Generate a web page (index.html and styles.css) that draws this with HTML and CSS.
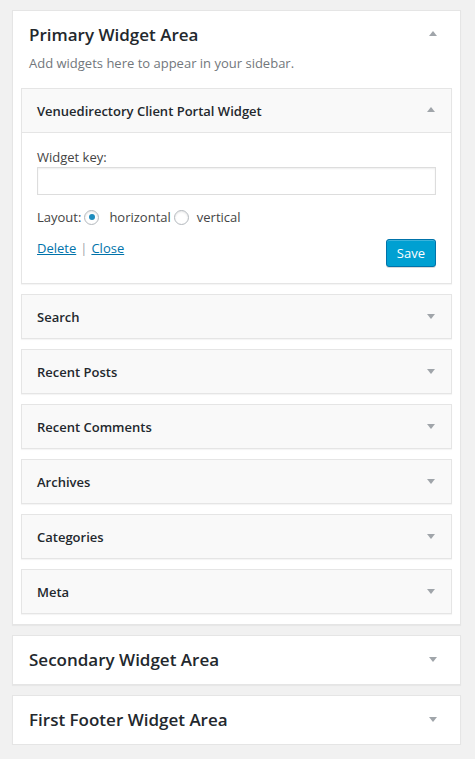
FILE: index.html
```html
<!DOCTYPE html>
<html>
<head>
<meta charset="utf-8">
<link rel="stylesheet" href="styles.css">
</head>
<body>
<div class="sidebars">
  <section class="area area-open">
    <div class="area-head area-head-open">
      <h2 class="area-title">Primary Widget Area</h2>
      <span class="arrow arrow-up"></span>
    </div>
    <p class="area-desc">Add widgets here to appear in your sidebar.</p>

    <div class="widget widget-open">
      <div class="widget-head">
        <h3 class="widget-title">Venuedirectory Client Portal Widget</h3>
        <span class="arrow arrow-up"></span>
      </div>
      <div class="widget-body">
        <label class="field-label">Widget key:</label>
        <input class="field-input" type="text">
        <div class="layout-row">
          <span>Layout:</span>
          <span class="radio radio-checked"></span>
          <span class="radio-text">horizontal</span>
          <span class="radio radio-second"></span>
          <span class="radio-text radio-text-second">vertical</span>
        </div>
        <div class="actions">
          <div class="links"><a href="#" class="link">Delete</a><span class="sep">|</span><a href="#" class="link">Close</a></div>
          <button class="save">Save</button>
        </div>
      </div>
    </div>

    <div class="widget"><div class="widget-head"><h3 class="widget-title">Search</h3><span class="arrow arrow-down"></span></div></div>
    <div class="widget"><div class="widget-head"><h3 class="widget-title">Recent Posts</h3><span class="arrow arrow-down"></span></div></div>
    <div class="widget"><div class="widget-head"><h3 class="widget-title">Recent Comments</h3><span class="arrow arrow-down"></span></div></div>
    <div class="widget"><div class="widget-head"><h3 class="widget-title">Archives</h3><span class="arrow arrow-down"></span></div></div>
    <div class="widget"><div class="widget-head"><h3 class="widget-title">Categories</h3><span class="arrow arrow-down"></span></div></div>
    <div class="widget"><div class="widget-head"><h3 class="widget-title">Meta</h3><span class="arrow arrow-down"></span></div></div>
  </section>

  <section class="area">
    <div class="area-head">
      <h2 class="area-title">Secondary Widget Area</h2>
      <span class="arrow arrow-down"></span>
    </div>
  </section>

  <section class="area">
    <div class="area-head">
      <h2 class="area-title">First Footer Widget Area</h2>
      <span class="arrow arrow-down"></span>
    </div>
  </section>
</div>
</body>
</html>
```

FILE: styles.css
```css
* { box-sizing: border-box; }

html, body {
  margin: 0;
  padding: 0;
  background: #f1f1f1;
}

body {
  font-family: "Open Sans", "Noto Sans", sans-serif;
  font-size: 13px;
  color: #444;
}

.sidebars {
  padding: 0 14px 0 12px;
}

.area {
  margin-top: 10px;
  background: #fff;
  border: 1px solid #e5e5e5;
  box-shadow: 0 1px 1px rgba(0, 0, 0, 0.04);
  padding: 0 8px;
}

.area-open {
  padding-bottom: 10px;
}

.area-head {
  display: flex;
  align-items: center;
  justify-content: space-between;
  padding: 12px 15px 13px 8px;
}

.area-head-open {
  padding-bottom: 0;
}

.area-title {
  margin: 0;
  font-size: 17px;
  line-height: 23px;
  font-weight: 600;
  color: #23282d;
}

.area-desc {
  margin: 8px 0 16px;
  padding: 0 8px;
  line-height: 18px;
  color: #72777c;
}

.arrow {
  display: block;
  width: 0;
  height: 0;
  border-left: 4px solid transparent;
  border-right: 4px solid transparent;
}

.arrow-up {
  border-bottom: 5px solid #a0a5aa;
  margin-top: -3px;
}

.arrow-down {
  border-top: 5px solid #a0a5aa;
}

.widget {
  margin-top: 10px;
  background: #f9f9f9;
  border: 1px solid #e5e5e5;
  box-shadow: 0 1px 1px rgba(0, 0, 0, 0.04);
}

.widget-open {
  margin-top: 0;
}

.widget-head {
  height: 43px;
  display: flex;
  align-items: center;
  justify-content: space-between;
  padding: 0 16px 0 15px;
}

.widget-open .widget-head {
  height: 44px;
  border-bottom: 1px solid #e5e5e5;
}

.widget-title {
  margin: 0;
  font-size: 13px;
  font-weight: 600;
  line-height: 18px;
  color: #23282d;
}

.widget-body {
  background: #fff;
  padding: 15px 15px 16px;
}

.field-label {
  display: block;
  line-height: 18px;
}

.field-input {
  display: block;
  width: 100%;
  height: 28px;
  margin: 1px 0 0;
  border: 1px solid #ddd;
  box-shadow: inset 0 1px 2px rgba(0, 0, 0, 0.07);
  background: #fff;
  font: inherit;
}

.layout-row {
  display: flex;
  align-items: center;
  height: 22px;
  margin-top: 11px;
  line-height: 18px;
}

.radio {
  display: block;
  width: 15px;
  height: 15px;
  border: 1px solid #b4b9be;
  border-radius: 50%;
  background: #fff;
  box-shadow: inset 0 1px 2px rgba(0, 0, 0, 0.1);
  margin: 0 10px 0 3px;
  position: relative;
}

.radio-checked::after {
  content: "";
  position: absolute;
  left: 3.5px;
  top: 3.5px;
  width: 6px;
  height: 6px;
  border-radius: 50%;
  background: #1e8cbe;
}

.radio-second {
  margin: 0 8px 0 3px;
}

.actions {
  display: flex;
  justify-content: space-between;
  align-items: flex-start;
  margin-top: 11px;
}

.links {
  line-height: 18px;
}

.link {
  color: #0073aa;
  text-decoration: underline;
}

.sep {
  color: #a0a5aa;
  margin: 0 4px;
}

.save {
  height: 28px;
  padding: 0 10px 1px;
  border: 1px solid #0073aa;
  border-radius: 3px;
  background: #00a0d2;
  color: #fff;
  font-family: inherit;
  font-size: 13px;
  line-height: 26px;
  box-shadow: inset 0 1px 0 rgba(120, 200, 230, 0.5), 0 1px 0 rgba(0, 0, 0, 0.15);
}
```
